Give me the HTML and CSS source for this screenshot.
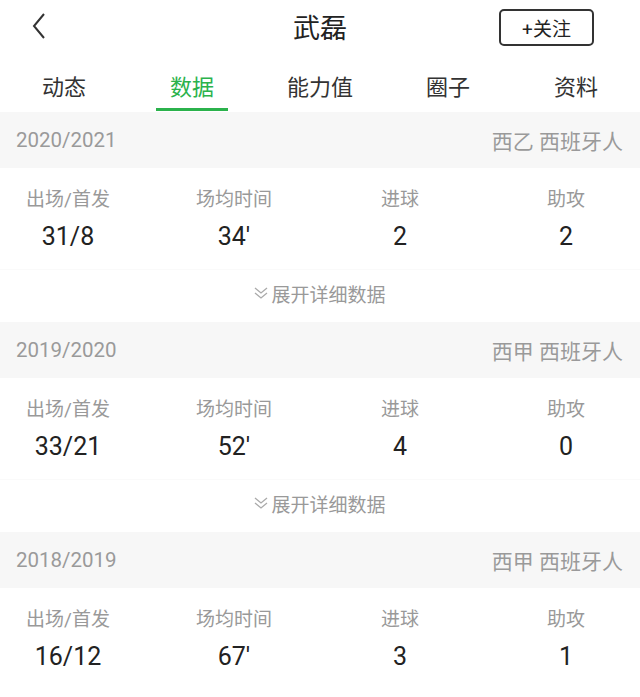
FILE: index.html
```html
<!DOCTYPE html>
<html>
  <head>
    <meta name="viewport" content="width=device-width, initial-scale=1.0">
    <title>武磊</title>
    <link rel="stylesheet" href="styles.css">
  </head>

  <body>
    <!-- Top bar -->
    <div class="topbar">
      <svg class="back" width="14" height="26" viewBox="0 0 14 26">
        <path d="M12 1 L2 13 L12 25" fill="none" stroke="#333" stroke-width="2"/>
      </svg>
      <h1 class="title">武磊</h1>
      <button class="follow">+关注</button>
    </div>

    <!-- Tabs -->
    <div class="tabs">
      <div class="tab">动态</div>
      <div class="tab active">数据</div>
      <div class="tab">能力值</div>
      <div class="tab">圈子</div>
      <div class="tab">资料</div>
    </div>

    <!-- Season 2020/2021 -->
    <div class="season">
      <span class="year">2020/2021</span>
      <span class="league">西乙 西班牙人</span>
    </div>
    <div class="stats">
      <div class="stat"><div class="label">出场/首发</div><div class="value">31/8</div></div>
      <div class="stat"><div class="label">场均时间</div><div class="value">34'</div></div>
      <div class="stat"><div class="label">进球</div><div class="value">2</div></div>
      <div class="stat"><div class="label">助攻</div><div class="value">2</div></div>
    </div>
    <div class="expand">
      <svg width="14" height="13" viewBox="0 0 14 13">
        <path d="M1 1 L7 6 L13 1 M1 6 L7 11 L13 6" fill="none" stroke="#aaa" stroke-width="1.3"/>
      </svg>
      <span>展开详细数据</span>
    </div>

    <!-- Season 2019/2020 -->
    <div class="season">
      <span class="year">2019/2020</span>
      <span class="league">西甲 西班牙人</span>
    </div>
    <div class="stats">
      <div class="stat"><div class="label">出场/首发</div><div class="value">33/21</div></div>
      <div class="stat"><div class="label">场均时间</div><div class="value">52'</div></div>
      <div class="stat"><div class="label">进球</div><div class="value">4</div></div>
      <div class="stat"><div class="label">助攻</div><div class="value">0</div></div>
    </div>
    <div class="expand">
      <svg width="14" height="13" viewBox="0 0 14 13">
        <path d="M1 1 L7 6 L13 1 M1 6 L7 11 L13 6" fill="none" stroke="#aaa" stroke-width="1.3"/>
      </svg>
      <span>展开详细数据</span>
    </div>

    <!-- Season 2018/2019 -->
    <div class="season">
      <span class="year">2018/2019</span>
      <span class="league">西甲 西班牙人</span>
    </div>
    <div class="stats">
      <div class="stat"><div class="label">出场/首发</div><div class="value">16/12</div></div>
      <div class="stat"><div class="label">场均时间</div><div class="value">67'</div></div>
      <div class="stat"><div class="label">进球</div><div class="value">3</div></div>
      <div class="stat"><div class="label">助攻</div><div class="value">1</div></div>
    </div>
  </body>
</html>
```

FILE: styles.css
```css
/* Page */
body {
  margin: 0;
  background: #fff;
  font-family: Roboto, "Noto Sans CJK SC", sans-serif;
  overflow: hidden;
}

/* Top bar with back arrow, name and follow button */
.topbar {
  display: grid;
  grid-template-columns: 1fr auto 1fr;
  align-items: center;
  height: 54px;
  padding: 0 32px;
}

.back {
  display: block;
  margin-top: -2px;
}

.title {
  margin: 0 0 2px;
  font-size: 27px;
  font-weight: normal;
  color: #222;
}

.follow {
  justify-self: end;
  width: 95px;
  height: 37px;
  margin-right: 14px;
  border: 2px solid #333;
  border-radius: 5px;
  background: #fff;
  color: #222;
  font-family: Roboto, "Noto Sans CJK SC", sans-serif;
  font-size: 19px;
  padding: 0;
}

/* Tabs */
.tabs {
  display: grid;
  grid-template-columns: repeat(5, 1fr);
  height: 58px;
}

.tab {
  display: flex;
  align-items: center;
  justify-content: center;
  font-size: 22px;
  color: #333;
  position: relative;
  padding-top: 3px;
}

.tab.active {
  color: #2bb24c;
}

.tab.active::after {
  content: "";
  position: absolute;
  left: 28px;
  right: 28px;
  bottom: 1px;
  height: 3px;
  background: #2bb24c;
}

/* Season header */
.season {
  display: flex;
  align-items: center;
  justify-content: space-between;
  height: 56px;
  padding: 0 17px 0 16px;
  background: #f7f7f7;
  color: #9a9a9a;
}

.season .year {
  font-size: 20.5px;
}

.season .league {
  font-size: 21px;
}

/* Stats row */
.stats {
  display: grid;
  grid-template-columns: repeat(4, 166px);
  margin-left: -15px;
  padding: 20px 0 16px;
}

.stat {
  text-align: center;
}

.stat .label {
  font-size: 19px;
  line-height: 24px;
  color: #999;
}

.stat .value {
  margin-top: 9px;
  font-size: 25px;
  line-height: 32px;
  color: #222;
}

/* Expand link */
.expand {
  display: flex;
  align-items: center;
  justify-content: center;
  gap: 3px;
  height: 53px;
  padding-bottom: 6px;
  box-sizing: border-box;
  border-top: 1px solid #fafafa;
  font-size: 19px;
  color: #999;
}
```
